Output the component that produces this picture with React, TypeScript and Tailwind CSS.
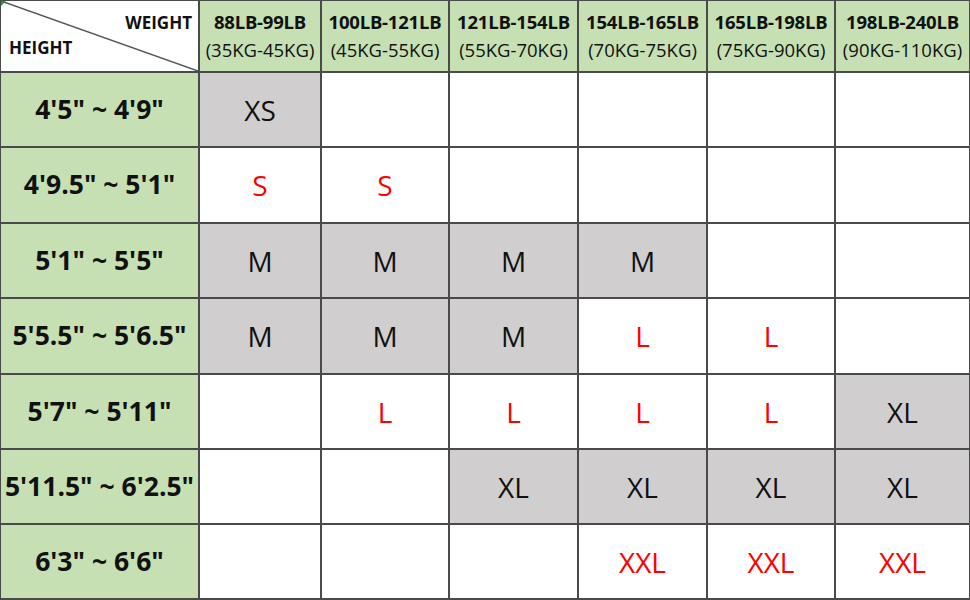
import React from "react";

type Cell = { t: string; red?: boolean; gray?: boolean } | null;

const weights = [
  ["88LB-99LB", "(35KG-45KG)"],
  ["100LB-121LB", "(45KG-55KG)"],
  ["121LB-154LB", "(55KG-70KG)"],
  ["154LB-165LB", "(70KG-75KG)"],
  ["165LB-198LB", "(75KG-90KG)"],
  ["198LB-240LB", "(90KG-110KG)"],
];

const M = { t: "M", gray: true };
const L = { t: "L", red: true };
const XL = { t: "XL", gray: true };
const XXL = { t: "XXL", red: true };

// rows: height label + 6 size cells
const rows: { h: string; cells: Cell[] }[] = [
  { h: "4'5\" ~ 4'9\"", cells: [{ t: "XS", gray: true }, null, null, null, null, null] },
  { h: "4'9.5\" ~ 5'1\"", cells: [{ t: "S", red: true }, { t: "S", red: true }, null, null, null, null] },
  { h: "5'1\" ~ 5'5\"", cells: [M, M, M, M, null, null] },
  { h: "5'5.5\" ~ 5'6.5\"", cells: [M, M, M, L, L, null] },
  { h: "5'7\" ~ 5'11\"", cells: [null, L, L, L, L, XL] },
  { h: "5'11.5\" ~ 6'2.5\"", cells: [null, null, XL, XL, XL, XL] },
  { h: "6'3\" ~ 6'6\"", cells: [null, null, null, XXL, XXL, XXL] },
];

export default function App() {
  return (
    <div
      className="w-[970px] h-[600px] bg-white overflow-hidden"
      style={{ fontFamily: '"Open Sans", "Noto Sans", sans-serif' }}
    >
      <div className="grid grid-cols-[199px_122px_128px_129px_129px_128px_135px] grid-rows-[72px_75px_76px_75px_76px_75px_75px_75px] border-l border-t border-[#4a4a4a]">
        {/* corner cell */}
        <div className="relative border-r-2 border-b-2 border-[#4a4a4a] bg-white">
          <svg className="absolute inset-0" width="197" height="70" viewBox="0 0 197 70">
            <line x1="0" y1="0" x2="197" y2="70" stroke="#555" strokeWidth="1.5" />
          </svg>
          <div className="absolute left-0 top-0 w-0 h-0 border-t-[5px] border-r-[5px] border-t-[#1a9c3a] border-r-transparent" />
          <span className="absolute right-[6px] top-[13px] text-[17px] font-bold text-[#111] leading-none">WEIGHT</span>
          <span className="absolute left-[8px] top-[38px] text-[17px] font-bold text-[#111] leading-none">HEIGHT</span>
        </div>
        {weights.map(([lb, kg]) => (
          <div
            key={lb}
            className="flex flex-col items-center justify-center bg-[#c6e0b4] border-r-2 border-b-2 border-[#4a4a4a] text-[#111]"
          >
            <span className="text-[18.5px] font-bold leading-[28px] tracking-[-0.2px]">{lb}</span>
            <span className="text-[18.5px] leading-[28px]">{kg}</span>
          </div>
        ))}
        {rows.map((r) => (
          <React.Fragment key={r.h}>
            <div className="flex items-center justify-center bg-[#c6e0b4] border-r-2 border-b-2 border-[#4a4a4a] text-[26.5px] font-bold text-[#111] whitespace-nowrap">
              {r.h}
            </div>
            {r.cells.map((c, i) => (
              <div
                key={i}
                className={`flex items-center justify-center border-r-2 border-b-2 border-[#4a4a4a] text-[28px] ${
                  c?.gray ? "bg-[#d0cece]" : "bg-white"
                } ${c?.red ? "text-[#ff0000]" : "text-[#111]"}`}
              >
                {c?.t}
              </div>
            ))}
          </React.Fragment>
        ))}
      </div>
    </div>
  );
}
